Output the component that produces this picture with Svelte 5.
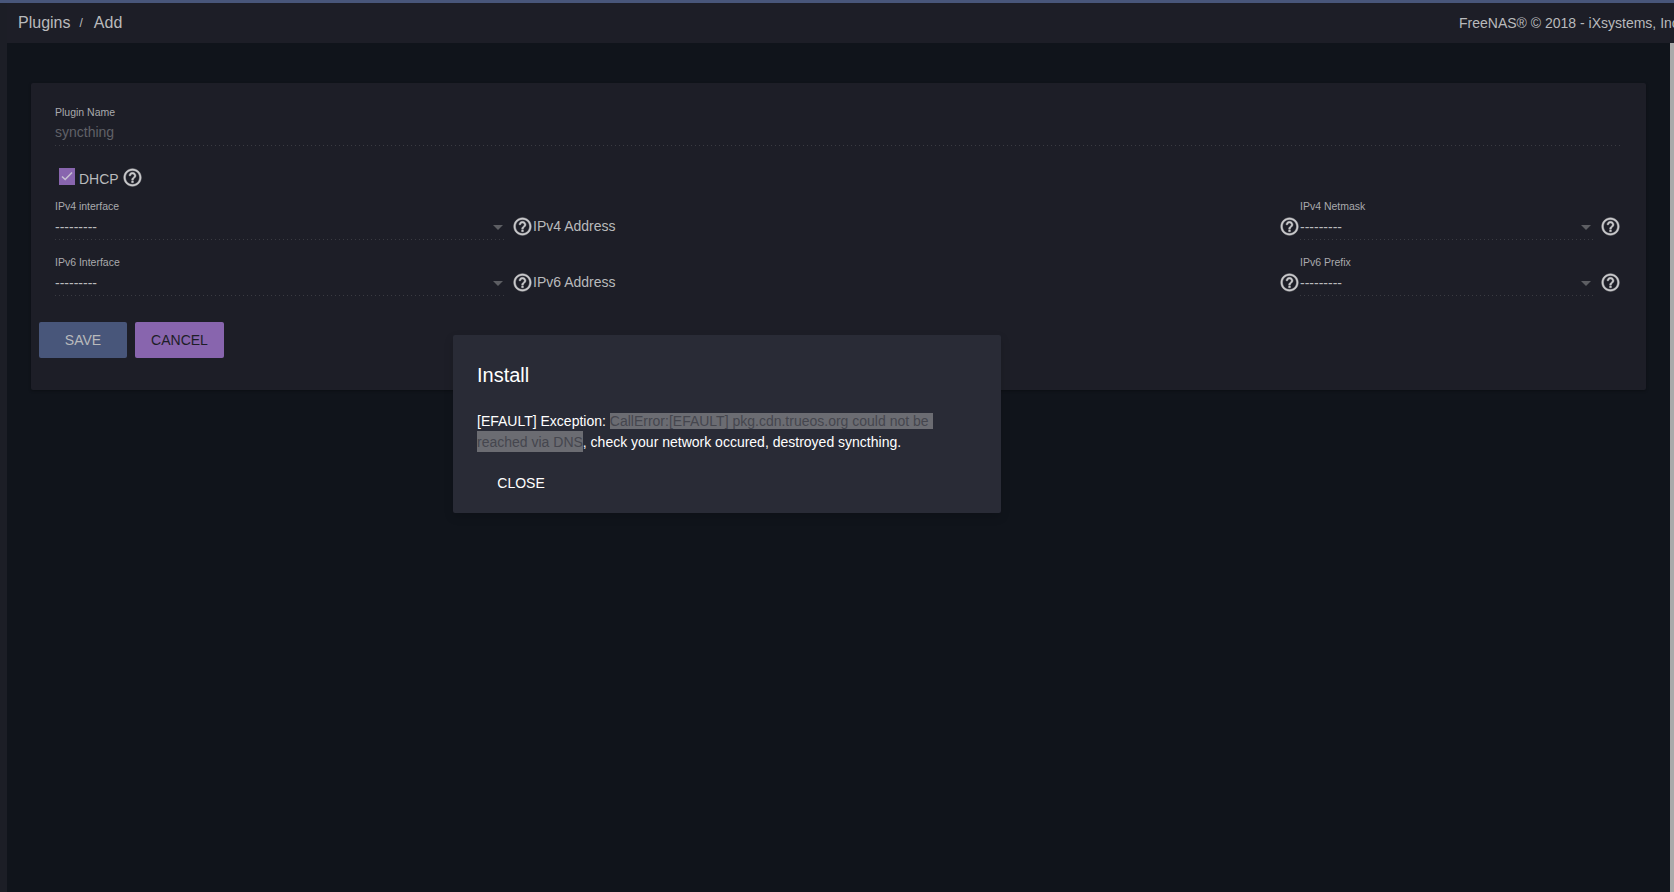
<script>
  const rows = [
    { a: 'IPv4 interface', b: 'IPv4 Address', c: 'IPv4 Netmask' },
    { a: 'IPv6 Interface', b: 'IPv6 Address', c: 'IPv6 Prefix' }
  ];
</script>

{#snippet help()}
  <svg class="help" viewBox="0 0 24 24" width="21" height="21" aria-hidden="true">
    <path d="M11 18h2v-2h-2v2zm1-16C6.48 2 2 6.48 2 12s4.48 10 10 10 10-4.48 10-10S17.52 2 12 2zm0 18c-4.41 0-8-3.59-8-8s3.59-8 8-8 8 3.59 8 8-3.59 8-8 8zm0-14c-2.21 0-4 1.79-4 4h2c0-1.1.9-2 2-2s2 .9 2 2c0 2-3 1.75-3 5h2c0-2.25 3-2.5 3-5 0-2.21-1.79-4-4-4z"/>
  </svg>
{/snippet}

{#snippet select(label)}
  <div class="select">
    <span class="small">{label}</span>
    <div class="value"><span class="dashes">---------</span><i class="arrow"></i></div>
  </div>
{/snippet}

<div class="page">
  <div class="topline"></div>
  <div class="shell">
    <aside class="rail"></aside>
    <div class="main">
      <header class="bar">
        <div class="crumbs"><span>Plugins</span><em>/</em><span>Add</span></div>
        <div class="copy">FreeNAS® © 2018 - iXsystems, Inc</div>
      </header>
      <section class="content">
        <form class="card">
          <div class="field name">
            <span class="small">Plugin Name</span>
            <div class="input">syncthing</div>
          </div>
          <div class="dhcp">
            <span class="check">
              <svg viewBox="0 0 16 16" width="16" height="16" aria-hidden="true"><path d="M3 8.5l3.2 3L13 4.5" /></svg>
            </span>
            <span class="dhcp-label">DHCP</span>
            {@render help()}
          </div>
          {#each rows as r}
            <div class="row">
              <div class="cell">{@render select(r.a)}{@render help()}</div>
              <div class="cell">
                <div class="text">{r.b}</div>
                {@render help()}
              </div>
              <div class="cell">{@render select(r.c)}{@render help()}</div>
            </div>
          {/each}
          <div class="actions">
            <button type="button" class="save">SAVE</button>
            <button type="button" class="cancel">CANCEL</button>
          </div>
        </form>
      </section>
    </div>
    <div class="scroll"></div>
  </div>
  <div class="dialog">
    <h2>Install</h2>
    <p>[EFAULT] Exception: <mark class="l1">CallError:[EFAULT] pkg.cdn.trueos.org could not be</mark> <mark class="l2">reached via DNS</mark>, check your network occured, destroyed syncthing.</p>
    <button type="button" class="close">CLOSE</button>
  </div>
</div>

<style>
  :global(body) { margin: 0; background: #10141b; }
  .page {
    position: relative;
    width: 1674px;
    height: 892px;
    overflow: hidden;
    display: flex;
    flex-direction: column;
    font-family: "Liberation Sans", Arial, sans-serif;
    color: #b9babc;
    background: #10141b;
  }
  .topline { height: 3px; background: #48567a; flex: none; }
  .shell { flex: 1; display: flex; min-height: 0; position: relative; }
  .rail { width: 7px; background: #1c1e26; flex: none; }
  .main { flex: 1; min-width: 0; display: flex; flex-direction: column; }
  .bar {
    height: 40px;
    flex: none;
    background: #1d1e27;
    display: flex;
    align-items: center;
    justify-content: space-between;
    padding: 0 0 0 11px;
    white-space: nowrap;
  }
  .crumbs { font-size: 16px; display: flex; align-items: center; }
  .crumbs em { font-style: normal; font-size: 12px; margin: 0 11px 0 9px; }
  .copy { font-size: 14px; width: 215px; overflow: hidden; flex: none; margin-bottom: 1px; }
  .content { flex: 1; padding: 40px 0 0 24px; }
  .card {
    width: 1615px;
    height: 307px;
    box-sizing: border-box;
    background: #1d1e27;
    border-radius: 2px;
    padding: 23px 24px 0;
    box-shadow: 0 1px 3px rgba(0,0,0,.3);
  }
  .small { display: block; font-size: 10.5px; line-height: 13px; color: #a9aaad; }
  .input {
    font-size: 14px;
    line-height: 18px;
    color: #606167;
    margin-top: 4px;
    padding-bottom: 5px;
    width: 1566px;
    background: repeating-linear-gradient(90deg, #3a3b42 0 1px, transparent 1px 4px) left bottom / 100% 1px no-repeat;
  }
  .dhcp { display: flex; align-items: flex-start; margin: 21px 0 0 4px; height: 23px; }
  .check {
    width: 16px;
    height: 17px;
    margin-top: 1px;
    background: #8865ae;
    display: block;
    margin-right: 4px;
  }
  .check svg { display: block; }
  .check path { fill: none; stroke: #c7c0d2; stroke-width: 1.6; }
  .dhcp-label { font-size: 14px; line-height: 18px; margin-top: 3px; margin-right: 3px; }
  .help { fill: #c9c9cb; stroke: #c9c9cb; stroke-width: 0.5; flex: none; display: block; }
  .row {
    display: grid;
    grid-template-columns: 478px 767px 321px;
    height: 56px;
  }
  .cell { display: flex; align-items: flex-end; }
  .cell .help { margin-bottom: 9px; }
  .select { flex: 1; min-width: 0; padding-bottom: 6px; }
  .value {
    display: flex;
    align-items: center;
    justify-content: space-between;
    height: 26px;
    margin-top: 1px;
    margin-right: 5px;
    padding-right: 4px;
    background: repeating-linear-gradient(90deg, #3a3b42 0 1px, transparent 1px 4px) left bottom / 100% 1px no-repeat;
  }
  .dashes { font-size: 14px; color: #b9babc; }
  .arrow {
    width: 0;
    height: 0;
    border-left: 5px solid transparent;
    border-right: 5px solid transparent;
    border-top: 5px solid #5d5e63;
  }
  .text {
    flex: 1;
    font-size: 14px;
    line-height: 20px;
    padding-bottom: 10px;
    color: #b9babc;
  }
  .actions { display: flex; gap: 8px; margin: 20px 0 0 -16px; }
  button {
    font: inherit;
    font-size: 14px;
    height: 36px;
    border: 0;
    padding: 0;
    border-radius: 2px;
  }
  .save { width: 88px; background: #48567a; color: #b9babc; }
  .cancel { width: 89px; background: #8865ae; color: #1d1e27; }
  .scroll { position: absolute; right: 0; top: 40px; bottom: 0; width: 4px; background: #aaaaaa; }
  .dialog {
    position: absolute;
    left: 453px;
    top: 335px;
    width: 548px;
    height: 178px;
    box-sizing: border-box;
    padding: 26px 24px 0;
    background: #292b36;
    border-radius: 2px;
    box-shadow: 0 4px 10px rgba(0,0,0,.15);
    color: #fff;
  }
  h2 { margin: 0; font-size: 20px; font-weight: 400; line-height: 28px; }
  p { margin: 22px 0 0; font-size: 14px; line-height: 21px; }
  mark { background: #6b6c72; color: #45464e; }
  .l1 { padding-right: 4px; }
  .l2 { padding: 3px 0 2px; }
  .close {
    background: transparent;
    color: #fff;
    width: 88px;
    margin-top: 12px;
  }
</style>
